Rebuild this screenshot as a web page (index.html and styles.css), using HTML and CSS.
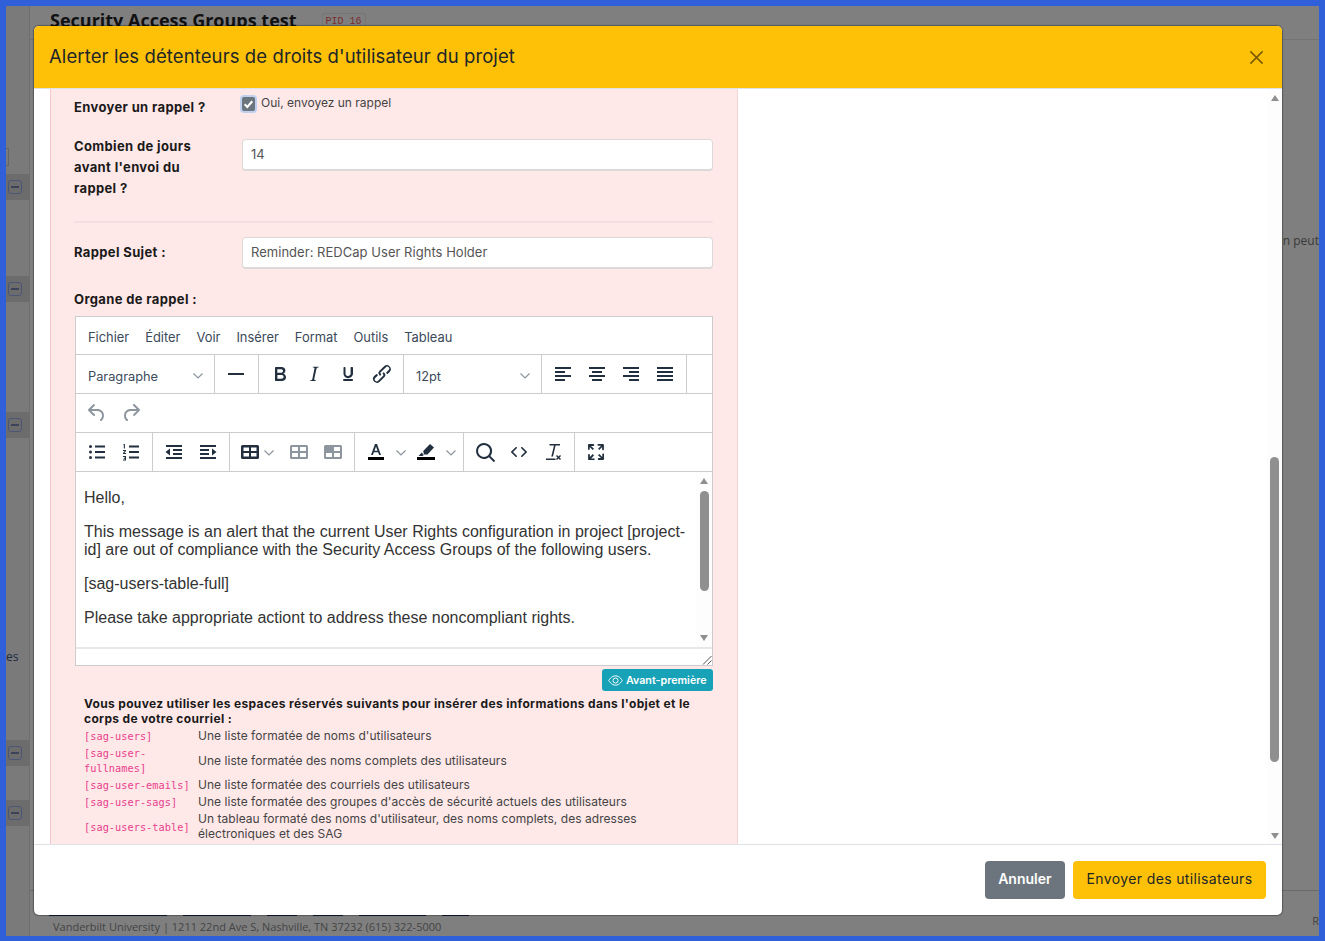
FILE: index.html
```html
<!DOCTYPE html>
<html lang="fr">
<head>
    <meta charset="UTF-8">
    <meta name="viewport" content="width=device-width, initial-scale=1.0">
    <title>Alerter les détenteurs de droits d'utilisateur du projet</title>
    <link rel="stylesheet" href="styles.css">
</head>
<body>

<div class="frame">
    <div class="page">
        <div class="page-rail">
            <span class="rail-input"></span>
            <span class="rail-row rail-row-1"><span class="minus"></span></span>
            <span class="rail-row rail-row-2"><span class="minus"></span></span>
            <span class="rail-row rail-row-3"><span class="minus"></span></span>
            <span class="rail-text">es</span>
            <span class="rail-row rail-row-4"><span class="minus"></span></span>
            <span class="rail-row rail-row-5"><span class="minus"></span></span>
        </div>
        <div class="page-title">
            <h1>Security Access Groups test</h1>
            <span class="pid">PID 16</span>
        </div>
        <span class="page-side">n peut</span>
        <div class="page-footer">
            <div class="footer-links">
                <span class="l1"></span><span class="l2"></span><span class="l3"></span><span class="l3"></span><span class="l4"></span><span class="l5"></span>
            </div>
            <div class="footer-address">Vanderbilt University | 1211 22nd Ave S, Nashville, TN 37232 (615) 322-5000</div>
            <span class="footer-r">R</span>
        </div>
    </div>

    <div class="modal">
        <header class="modal-head">
            <h2>Alerter les détenteurs de droits d'utilisateur du projet</h2>
            <svg class="close" viewBox="0 0 16 16"><path d="M1.5 1.5l13 13M14.5 1.5l-13 13"/></svg>
        </header>

        <div class="modal-body">
            <div class="scroll-area">
                <section class="reminder">
                    <div class="field field-check">
                        <label class="field-label">Envoyer un rappel ?</label>
                        <div class="check-wrap">
                            <span class="check">
                                <svg viewBox="0 0 12 12"><path d="M2.5 6.2l2.4 2.5 4.6-5.2"/></svg>
                            </span>
                            Oui, envoyez un rappel
                        </div>
                    </div>
                    <div class="field field-days">
                        <label class="field-label">Combien de jours avant l'envoi du rappel ?</label>
                        <div class="input">14</div>
                    </div>
                    <hr class="divider">
                    <div class="field field-subject">
                        <label class="field-label">Rappel Sujet :</label>
                        <div class="input">Reminder: REDCap User Rights Holder</div>
                    </div>
                    <div class="field-label body-label">Organe de rappel :</div>

                    <div class="editor">
                        <nav class="menubar">
                            <span>Fichier</span><span>Éditer</span><span>Voir</span><span>Insérer</span><span>Format</span><span>Outils</span><span>Tableau</span>
                        </nav>
                        <div class="toolbar">
                            <div class="group group-select w-para">Paragraphe <svg class="chev" viewBox="0 0 10 6"><path d="M.5.5L5 5 9.5.5"/></svg></div>
                            <div class="group w-line">
                                <svg class="tool" viewBox="0 0 24 24"><path class="fill" d="M4 11h16v2H4z"/></svg>
                            </div>
                            <div class="group w-format">
                                <svg class="tool" viewBox="0 0 24 24"><path class="fill" d="M7.8 19c-.3 0-.5 0-.6-.2l-.2-.5V5.700c0-.2 0-.4.2-.5l.6-.2h5c1.500 0 2.700.3 3.500 1 .7.600 1.100 1.400 1.100 2.500a3 3 0 0 1-.6 1.900c-.4.600-1 1-1.600 1.200.4.100.9.300 1.300.6s.8.700 1 1.200c.4.400.5 1 .5 1.600 0 1.300-.4 2.300-1.300 3-.8.700-2.100 1-3.800 1H7.800zm5-8.300c.6 0 1.200-.1 1.600-.5.400-.3.600-.7.600-1.300 0-1.100-.8-1.700-2.300-1.700H9.300v3.500h3.500zm.5 6c.7 0 1.300-.1 1.700-.4.400-.4.600-.9.600-1.500s-.2-1-.7-1.400c-.4-.3-1-.4-2-.4H9.400v3.800h3.900z"/></svg>
                                <svg class="tool" viewBox="0 0 24 24"><path class="fill" d="M16.700 4.700l-.1.900h-.3c-.6 0-1 0-1.400.3-.3.300-.4.600-.5 1.100l-2.100 9.800v.6c0 .5.400.8 1.400.8h.2l-.2.800H8l.2-.8h.2c1.100 0 1.800-.5 2-1.500l2-9.800.1-.5c0-.6-.4-.8-1.400-.8h-.3l.2-.9h5.900z"/></svg>
                                <svg class="tool" viewBox="0 0 24 24"><path class="fill" d="M16 5c.6 0 1 .4 1 1v5.500a4 4 0 0 1-.4 1.800l-1 1.400a5.300 5.300 0 0 1-5.500 1 4 4 0 0 1-2.200-2.400c-.3-.6-.4-1.200-.4-1.800V6c0-.6.400-1 1-1s1 .4 1 1v5.500c0 .3 0 .6.200 1a3 3 0 0 0 .5.800l.9.600.9.100.9-.2.900-.5.600-.8c.2-.3.2-.6.200-1V6c0-.6.400-1 1-1zM8 17h8c.6 0 1 .4 1 1s-.4 1-1 1H8a1 1 0 0 1 0-2z"/></svg>
                                <svg class="tool" viewBox="0 0 24 24"><path class="fill" d="M6.200 12.300a1 1 0 0 1 1.400 1.400l-2.100 2a2 2 0 1 0 2.800 2.800l4.800-4.800a1 1 0 0 0 0-1.400 1 1 0 1 1 1.400-1.300 2.900 2.900 0 0 1 0 4l-4.800 4.800a4 4 0 0 1-5.600-5.700l2.100-1.800zm11.600-.6a1 1 0 0 1-1.400-1.400l2.100-2a2 2 0 1 0-2.800-2.800L10.700 10.300a1 1 0 0 0 0 1.400 1 1 0 1 1-1.400 1.300 2.900 2.900 0 0 1 0-4l4.800-4.800a4 4 0 0 1 5.600 5.700l-1.900 1.800z"/></svg>
                            </div>
                            <div class="group group-select w-size">12pt <svg class="chev" viewBox="0 0 10 6"><path d="M.5.5L5 5 9.5.5"/></svg></div>
                            <div class="group w-align">
                                <svg class="tool" viewBox="0 0 24 24"><path class="fill" d="M4 5h16v2H4zM4 9h10v2H4zM4 13h16v2H4zM4 17h10v2H4z"/></svg>
                                <svg class="tool" viewBox="0 0 24 24"><path class="fill" d="M4 5h16v2H4zM7 9h10v2H7zM4 13h16v2H4zM7 17h10v2H7z"/></svg>
                                <svg class="tool" viewBox="0 0 24 24"><path class="fill" d="M4 5h16v2H4zM10 9h10v2H10zM4 13h16v2H4zM10 17h10v2H10z"/></svg>
                                <svg class="tool" viewBox="0 0 24 24"><path class="fill" d="M4 5h16v2H4zM4 9h16v2H4zM4 13h16v2H4zM4 17h16v2H4z"/></svg>
                            </div>
                        </div>
                        <div class="toolbar">
                            <div class="group group-plain">
                                <svg class="tool disabled" viewBox="0 0 24 24"><path class="fill" d="M6.400 8H12c3.700 0 6.200 2 6.800 5.100.6 2.700-.4 5.600-2.300 6.800a1 1 0 0 1-1-1.800c1.100-.7 1.800-2.700 1.400-4.600-.5-2.100-2.100-3.500-4.900-3.500H6.400l3.300 3.300a1 1 0 1 1-1.400 1.400l-5-5a1 1 0 0 1 0-1.400l5-5a1 1 0 0 1 1.400 1.400L6.400 8z"/></svg>
                                <svg class="tool disabled" viewBox="0 0 24 24"><path class="fill" d="M17.600 10H12c-2.800 0-4.400 1.400-4.900 3.500-.4 2 .3 3.900 1.400 4.600a1 1 0 1 1-1 1.800c-2-1.200-2.900-4.100-2.300-6.800.6-3 3-5.100 6.800-5.100h5.600l-3.300-3.300a1 1 0 1 1 1.400-1.400l5 5a1 1 0 0 1 0 1.400l-5 5a1 1 0 0 1-1.400-1.400l3.300-3.100z"/></svg>
                            </div>
                        </div>
                        <div class="toolbar">
                            <div class="group w-lists">
                                <svg class="tool" viewBox="0 0 24 24"><path class="fill" d="M10 5.500h10v2H10zM10 11h10v2H10zM10 16.500h10v2H10z"/><circle class="fill" cx="5.500" cy="6.500" r="1.500"/><circle class="fill" cx="5.500" cy="12" r="1.500"/><circle class="fill" cx="5.500" cy="17.500" r="1.500"/></svg>
                                <svg class="tool" viewBox="0 0 24 24"><path class="fill" d="M10 5.500h10v2H10zM10 11h10v2H10zM10 16.500h10v2H10zM4.500 4h1.400v4.500H4.800V5H4.500zM4 10h3v1L5.300 13H7v1H4v-1l1.800-2H4zM4 16h3v4.500H4v-1h1.900v-.8H4.800v-.9h1.100V17H4z"/></svg>
                            </div>
                            <div class="group w-indent">
                                <svg class="tool" viewBox="0 0 24 24"><path class="fill" d="M4 5h16v2H4zM11 9h9v2h-9zM11 13h9v2h-9zM4 17h16v2H4zM8 8.500v7L3.500 12z"/></svg>
                                <svg class="tool" viewBox="0 0 24 24"><path class="fill" d="M4 5h16v2H4zM4 9h9v2H4zM4 13h9v2H4zM4 17h16v2H4zM16 8.500v7l4.500-3.500z"/></svg>
                            </div>
                            <div class="group w-table">
                                <span class="split">
                                    <svg class="tool" viewBox="0 0 24 24"><path class="fill" fill-rule="evenodd" d="M3 6.500A1.500 1.500 0 0 1 4.500 5h15A1.500 1.500 0 0 1 21 6.500v11a1.500 1.500 0 0 1-1.500 1.500h-15A1.500 1.500 0 0 1 3 17.500zM5.500 11H11V7.500H5.500zm7.500 0h5.500V7.500H13zm-7.500 5.500H11V13H5.500zm7.500 0h5.500V13H13z"/></svg>
                                    <svg class="chev" viewBox="0 0 10 6"><path d="M.5.5L5 5 9.5.5"/></svg>
                                </span>
                                <svg class="tool disabled" viewBox="0 0 24 24"><path class="fill" fill-rule="evenodd" d="M3 6.500A1.500 1.500 0 0 1 4.500 5h15A1.500 1.500 0 0 1 21 6.500v11a1.500 1.500 0 0 1-1.500 1.500h-15A1.500 1.500 0 0 1 3 17.500zM5 11h6V7H5zm8 0h6V7h-6zm-8 6h6v-4H5zm8 0h6v-4h-6z"/></svg>
                                <svg class="tool disabled" viewBox="0 0 24 24"><path class="fill" fill-rule="evenodd" d="M3 6.500A1.500 1.500 0 0 1 4.500 5h15A1.500 1.500 0 0 1 21 6.500v11a1.500 1.500 0 0 1-1.500 1.500h-15A1.500 1.500 0 0 1 3 17.500zM5 17h6v-4H5zm8 0h6v-4h-6zm0-6h6V7h-6z"/></svg>
                            </div>
                            <div class="group w-color">
                                <span class="split">
                                    <svg class="tool" viewBox="0 0 24 24"><path class="fill" d="M11 4h2l4 11h-1.900l-1-2.800H9.900l-1 2.800H7zm-.5 6.700h3L12 6.500z"/><path class="black" d="M4 17h16v3H4z"/></svg>
                                    <svg class="chev" viewBox="0 0 10 6"><path d="M.5.5L5 5 9.500.5"/></svg>
                                </span>
                                <span class="split">
                                    <svg class="tool" viewBox="0 0 24 24"><path class="fill" d="M16 4l4 3.500-6.500 7H10l-.8-3.500zM7.800 12.500l2 2.500-1.300 1H4.500z"/><path class="black" d="M3 17h18v3H3z"/></svg>
                                    <svg class="chev" viewBox="0 0 10 6"><path d="M.5.5L5 5 9.500.5"/></svg>
                                </span>
                            </div>
                            <div class="group w-tools">
                                <svg class="tool" viewBox="0 0 24 24"><path class="fill" d="M16 17.300a8 8 0 1 1 1.400-1.400l4.300 4.400a1 1 0 0 1-1.400 1.400l-4.300-4.400zm-5-.3a6 6 0 1 0 0-12 6 6 0 0 0 0 12z"/></svg>
                                <svg class="tool" viewBox="0 0 24 24"><path class="fill" d="M9.800 15.700c.3.300.3.800 0 1-.3.400-.9.400-1.200 0l-4.400-4.100a.8.800 0 0 1 0-1.200l4.400-4.200c.3-.3.900-.3 1.200 0 .3.300.3.800 0 1.100L6 12l3.800 3.700zm4.400 0L18 12l-3.800-3.700a.8.800 0 0 1 0-1.100c.3-.3.900-.3 1.200 0l4.400 4.200c.3.300.3.900 0 1.200l-4.400 4.100c-.3.400-.9.400-1.200 0a.8.800 0 0 1 0-1z"/></svg>
                                <svg class="tool" viewBox="0 0 24 24"><path class="fill" d="M8.500 4H19v1.500h-4.400L12 16.500h-1.700L13 5.500H8.500zM5 18.500h9.500V20H5zM16 15l1.500 1.500L19 15l1 1-1.500 1.500L20 19l-1 1-1.500-1.500L16 20l-1-1 1.500-1.500L15 16z"/></svg>
                            </div>
                            <div class="group group-plain">
                                <svg class="tool" viewBox="0 0 24 24"><path class="fill" d="M15.300 10l-1.200-1.300 2.900-3h-2.300a.9.900 0 1 1 0-1.700H19c.5 0 .9.400.9.900v4.400a.9.900 0 1 1-1.800 0V7l-2.800 3zm0 4l3 3v-2.300a.9.900 0 1 1 1.700 0V19c0 .5-.4.900-.9.900h-4.400a.9.900 0 1 1 0-1.800H17l-3-2.900 1.300-1.200zM10 15.400l-2.900 3h2.300a.9.900 0 1 1 0 1.700H5a.9.900 0 0 1-.9-.9v-4.400a.9.900 0 1 1 1.800 0V17l2.900-3 1.200 1.400zM8.700 10L5.700 7v2.300a.9.900 0 0 1-1.700 0V5c0-.5.4-.9.900-.9h4.400a.9.900 0 0 1 0 1.800H7l3 2.900L8.700 10z"/></svg>
                            </div>
                        </div>
                        <div class="editor-content">
                            <div class="editor-text">
                                <p>Hello,</p>
                                <p>This message is an alert that the current User Rights configuration in project [project-id] are out of compliance with the Security Access Groups of the following users.</p>
                                <p>[sag-users-table-full]</p>
                                <p>Please take appropriate actiont to address these noncompliant rights.</p>
                            </div>
                            <div class="scrollbar scrollbar-inner">
                                <span class="arrow-up"></span>
                                <span class="track"><span class="thumb"></span></span>
                                <span class="arrow-down"></span>
                            </div>
                        </div>
                        <div class="statusbar">
                            <svg class="resize" viewBox="0 0 10 10"><path d="M9.500 1L1 9.500M9.500 5.500L5.500 9.500"/></svg>
                        </div>
                    </div>

                    <div class="preview-row">
                        <button class="btn-preview">
                            <svg viewBox="0 0 16 16"><path d="M.8 8S3.500 3 8 3s7.200 5 7.200 5-2.700 5-7.200 5S.8 8 .8 8z"/><circle cx="8" cy="8" r="2.700"/></svg>
                            Avant-première
                        </button>
                    </div>

                    <div class="placeholders">
                        <p class="placeholders-intro">Vous pouvez utiliser les espaces réservés suivants pour insérer des informations dans l'objet et le corps de votre courriel :</p>
                        <table>
                            <tr><td><code>[sag-users]</code></td><td>Une liste formatée de noms d'utilisateurs</td></tr>
                            <tr><td><code>[sag-user-fullnames]</code></td><td>Une liste formatée des noms complets des utilisateurs</td></tr>
                            <tr><td><code>[sag-user-emails]</code></td><td>Une liste formatée des courriels des utilisateurs</td></tr>
                            <tr><td><code>[sag-user-sags]</code></td><td>Une liste formatée des groupes d'accès de sécurité actuels des utilisateurs</td></tr>
                            <tr><td><code>[sag-users-table]</code></td><td>Un tableau formaté des noms d'utilisateur, des noms complets, des adresses électroniques et des SAG</td></tr>
                        </table>
                    </div>
                </section>
            </div>
            <div class="scrollbar scrollbar-outer">
                <span class="arrow-up"></span>
                <span class="track"><span class="thumb"></span></span>
                <span class="arrow-down"></span>
            </div>
        </div>

        <footer class="modal-foot">
            <button class="btn btn-cancel">Annuler</button>
            <button class="btn btn-send">Envoyer des utilisateurs</button>
        </footer>
    </div>
</div>

</body>
</html>
```

FILE: styles.css
```css
html, body {
    margin: 0;
    height: 100%;
    overflow: hidden;
}
body {
    font-family: Inter, "Open Sans", sans-serif;
    color: #212529;
}
.frame {
    position: relative;
    box-sizing: border-box;
    height: 941px;
    padding: 6px 6px 5px 6px;
    background: #2f60d9;
}

/* greyed page behind the dialog */
.page {
    position: relative;
    height: 100%;
    background: #7f7f7f;
    overflow: hidden;
    font-family: "Open Sans", sans-serif;
    color: #3a3a3a;
}
.page-rail {
    position: absolute;
    left: 0;
    top: 0;
    width: 23px;
    height: 100%;
    background: #7a7a7a;
    border-right: 1px solid #6e6e6e;
}
.rail-input {
    position: absolute;
    left: -10px;
    top: 142px;
    width: 11px;
    height: 16px;
    border: 1px solid #666;
}
.rail-row {
    position: absolute;
    left: 0;
    box-sizing: border-box;
    width: 23px;
    height: 26px;
    padding-left: 2px;
    background: #6c6c6c;
    display: flex;
    align-items: center;
}
.rail-row-1 { top: 168px; }
.rail-row-2 { top: 270px; }
.rail-row-3 { top: 406px; }
.rail-row-4 { top: 734px; }
.rail-row-5 { top: 794px; }
.minus {
    box-sizing: border-box;
    width: 14px;
    height: 14px;
    border: 1px solid #4a5578;
    border-radius: 3px;
    background: linear-gradient(#3a4358, #3a4358) center / 8px 2px no-repeat;
}
.rail-text {
    position: absolute;
    left: 0;
    top: 642px;
    font-size: 12px;
    color: #1d2a44;
}
.page-title {
    position: absolute;
    left: 24px;
    right: 0;
    top: 0;
    height: 34px;
    box-sizing: border-box;
    padding: 2px 0 0 20px;
    display: flex;
    align-items: flex-start;
    gap: 25px;
    border-bottom: 1px solid #737373;
}
.page-title h1 {
    margin: 0;
    font-size: 18px;
    font-weight: 700;
    color: #111;
    white-space: nowrap;
}
.pid {
    font-family: "Liberation Mono", monospace;
    font-size: 10px;
    color: #7a2d2d;
    margin-top: 5px;
    padding: 2px 3px;
    border: 1px solid #757575;
    border-radius: 3px;
}
.page-side {
    position: absolute;
    right: 0;
    top: 226px;
    font-size: 12px;
    white-space: nowrap;
}
.page-footer {
    position: absolute;
    left: 24px;
    right: 0;
    top: 884px;
    padding: 24px 0 0 23px;
    border-top: 1px solid #6a6a6a;
    font-size: 11px;
    color: #444;
}
.footer-links {
    display: flex;
    gap: 16px;
    height: 1px;
    margin-left: -4px;
}
.footer-links span {
    background: #101a3a;
}
.l1 { width: 118px; }
.l2 { width: 68px; }
.l3 { width: 30px; }
.l4 { width: 67px; }
.l5 { width: 27px; }
.footer-address {
    margin-top: 3px;
}
.footer-r {
    position: absolute;
    right: 0;
    top: 22px;
}

/* dialog */
.modal {
    position: absolute;
    left: 34px;
    top: 26px;
    width: 1248px;
    height: 889px;
    display: flex;
    flex-direction: column;
    background: #fff;
    border-radius: 5px;
    box-shadow: 0 0 1px 1px rgba(0, 0, 0, .3);
    overflow: hidden;
}
.modal-head {
    flex: none;
    box-sizing: border-box;
    height: 63px;
    display: flex;
    align-items: center;
    justify-content: space-between;
    padding: 0 18px 2px 15px;
    background: #ffc107;
    border-bottom: 1px solid #dee2e6;
}
.modal-head h2 {
    margin: 0;
    font-size: 18.5px;
    font-weight: 400;
    letter-spacing: .1px;
}
.close {
    width: 15px;
    height: 15px;
    margin-top: 3px;
    fill: none;
    stroke: #7a5c04;
    stroke-width: 1.7;
}
.modal-body {
    flex: 1;
    min-height: 0;
    display: flex;
}
.scroll-area {
    flex: 1;
    overflow: hidden;
    padding-left: 16px;
}
.reminder {
    box-sizing: border-box;
    width: 688px;
    height: 100%;
    padding: 0 24px 0 23px;
    background: #ffe8e8;
    border-left: 1px solid #f5c6cb;
    border-right: 1px solid #f5d5d8;
    overflow: hidden;
}
.field {
    display: grid;
    grid-template-columns: 168px 471px;
}
.field-label {
    font-size: 13px;
    font-weight: 700;
    line-height: 21px;
    letter-spacing: .36px;
    color: #1a1a1a;
}
.field-check {
    height: 39px;
    padding-top: 8px;
}
.check-wrap {
    display: flex;
    align-items: flex-start;
    gap: 6px;
    font-size: 12px;
    line-height: 14px;
    color: #444;
    margin-top: -1px;
}
.check {
    display: flex;
    box-sizing: border-box;
    width: 13px;
    height: 14px;
    margin-top: 1px;
    background: #6c757d;
    border-radius: 2px;
    box-shadow: 0 0 0 2px #bfd0ee;
}
.check svg {
    fill: none;
    stroke: #fff;
    stroke-width: 2;
}
.field-days {
    margin-top: 3px;
}
.field-days .field-label {
    margin-top: -3px;
    padding-right: 30px;
}
.input {
    box-sizing: border-box;
    height: 32px;
    padding: 0 8px;
    line-height: 29px;
    font-size: 13px;
    letter-spacing: .03px;
    color: #555;
    background: #fff;
    border: 1px solid #ddd8da;
    border-bottom-width: 2px;
    border-radius: 4px;
}
.divider {
    margin: 22px 0 14px;
    border: 0;
    border-top: 2px solid #f5dfe1;
}
.field-subject .field-label {
    line-height: 30px;
}
.body-label {
    margin: 20px 0 6px;
}

/* rich text editor */
.editor {
    box-sizing: border-box;
    width: 638px;
    margin-left: 1px;
    background: #fff;
    border: 1px solid #ccc;
}
.menubar {
    box-sizing: border-box;
    height: 37px;
    display: flex;
    align-items: center;
    gap: 16px;
    padding: 3px 12px 0;
    font-size: 12.9px;
    color: #3b4a5a;
}
.toolbar {
    box-sizing: border-box;
    height: 39px;
    display: flex;
    border-top: 1px solid #ccc;
}
.group {
    box-sizing: border-box;
    height: 39px;
    display: flex;
    align-items: center;
    gap: 10px;
    padding: 0 9px;
    border-right: 1px solid #ccc;
}
.group-plain {
    border-right: 0;
}
.group-select {
    justify-content: space-between;
    font-size: 12.8px;
    color: #3b4a5a;
    padding: 3px 11px 0 12px;
}
.w-para { width: 139px; }
.w-line { width: 44px; }
.w-format { width: 145px; }
.w-size { width: 138px; }
.w-align { width: 145px; }
.w-lists { width: 77px; }
.w-indent { width: 77px; }
.w-table { width: 125px; padding-left: 8px; }
.w-color { width: 109px; gap: 8px; }
.w-tools { width: 111px; }
.tool {
    flex: none;
    width: 24px;
    height: 24px;
    margin-top: -2px;
}
.fill {
    fill: #222f3e;
}
.black {
    fill: #000;
}
.disabled .fill {
    fill: #8d959e;
}
.split {
    display: flex;
    align-items: center;
    gap: 2px;
}
.w-table .split {
    margin-right: 3px;
}
.w-color .split {
    gap: 8px;
}
.chev {
    flex: none;
    width: 10px;
    height: 6px;
    fill: none;
    stroke: #8d959e;
    stroke-width: 1.2;
}
.editor-content {
    box-sizing: border-box;
    height: 176px;
    display: flex;
    border-top: 1px solid #ccc;
    overflow: hidden;
}
.editor-text {
    flex: 1;
    padding: 1px 8px 0;
    font-family: "Liberation Sans", Arial, sans-serif;
    font-size: 16px;
    line-height: 18px;
    color: #333;
}
.editor-text p {
    margin: 16px 0;
}
.statusbar {
    box-sizing: border-box;
    height: 18px;
    display: flex;
    justify-content: flex-end;
    align-items: flex-end;
    border-top: 2px solid #e8e8e8;
}
.resize {
    width: 10px;
    height: 10px;
    fill: none;
    stroke: #555;
    stroke-width: 1;
}
.scrollbar {
    flex: none;
    display: flex;
    flex-direction: column;
    align-items: center;
    background: #fdfdfd;
}
.scrollbar-inner {
    width: 16px;
    padding: 6px 0 6px;
}
.scrollbar-outer {
    width: 15px;
    padding: 6px 0 5px;
}
.track {
    flex: 1;
    width: 100%;
    position: relative;
}
.thumb {
    position: absolute;
    left: 3px;
    width: 9px;
    background: #8f8f8f;
    border-radius: 5px;
}
.scrollbar-inner .thumb {
    top: 7px;
    height: 100px;
    left: 4px;
}
.scrollbar-outer .thumb {
    top: 356px;
    height: 305px;
}
.arrow-up, .arrow-down {
    width: 0;
    height: 0;
    border-left: 4px solid transparent;
    border-right: 4px solid transparent;
}
.arrow-up {
    border-bottom: 6px solid #8f8f8f;
}
.arrow-down {
    border-top: 6px solid #8f8f8f;
}

.preview-row {
    width: 639px;
    display: flex;
    justify-content: flex-end;
    margin-top: 3px;
}
.btn-preview {
    display: flex;
    align-items: center;
    gap: 3px;
    width: 111px;
    height: 22px;
    padding: 0 6px;
    font-family: inherit;
    font-size: 10.7px;
    font-weight: 600;
    white-space: nowrap;
    color: #fff;
    background: #17a2b8;
    border: 0;
    border-radius: 3px;
}
.btn-preview svg {
    flex: none;
    width: 15px;
    height: 15px;
    fill: none;
    stroke: #fff;
    stroke-width: 1;
}
.placeholders {
    padding: 5px 0 0 10px;
    width: 629px;
    font-size: 12px;
}
.placeholders-intro {
    margin: 0 0 1px;
    font-weight: 700;
    line-height: 15px;
    letter-spacing: .33px;
    color: #1a1a1a;
}
.placeholders table {
    border-collapse: collapse;
}
.placeholders td {
    padding: 1px 0;
    line-height: 15px;
    letter-spacing: .04px;
    color: #444;
}
.placeholders td:first-child {
    width: 114px;
}
code {
    font-family: "DejaVu Sans Mono", monospace;
    font-size: 10.25px;
    line-height: 13px;
    color: #e83e8c;
}

.modal-foot {
    flex: none;
    box-sizing: border-box;
    height: 71px;
    display: flex;
    justify-content: flex-end;
    align-items: center;
    gap: 8px;
    padding: 0 16px;
    border-top: 1px solid #dee2e6;
}
.btn {
    height: 38px;
    padding: 0 13px 3px;
    font-family: inherit;
    font-size: 14px;
    border: 0;
    border-radius: 4px;
}
.btn-cancel {
    color: #fff;
    background: #6c757d;
    font-weight: 600;
    padding: 0 13.5px 3px;
}
.btn-send {
    color: #212529;
    background: #ffc107;
    letter-spacing: .37px;
    padding: 0 13.5px 3px;
}
```
